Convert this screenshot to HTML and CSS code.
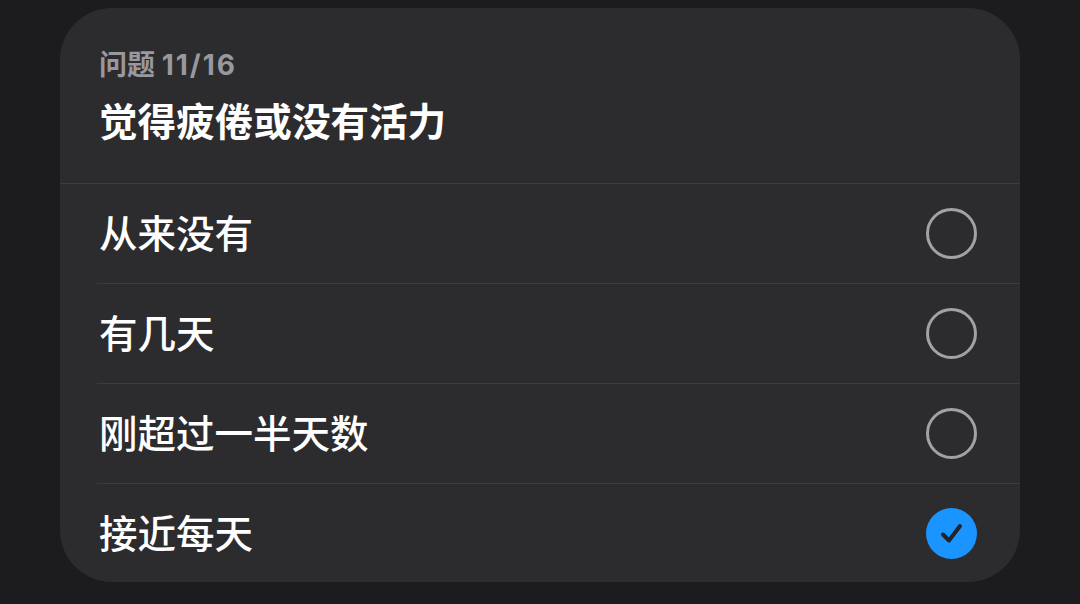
FILE: index.html
```html
<!DOCTYPE html>
<html lang="zh-CN">
<head>
<meta charset="utf-8">
<link rel="stylesheet" href="styles.css">
</head>
<body>
<div class="card">
  <div class="header">
    <div class="label">问题 <span class="num">11/16</span></div>
    <div class="title">觉得疲倦或没有活力</div>
  </div>
  <div class="options">
    <div class="row"><span class="text">从来没有</span><span class="radio"></span></div>
    <div class="row"><span class="text">有几天</span><span class="radio"></span></div>
    <div class="row"><span class="text">刚超过一半天数</span><span class="radio"></span></div>
    <div class="row"><span class="text">接近每天</span><span class="radio checked"><svg viewBox="0 0 51 51" width="51" height="51"><path d="M17 26.5 L23 32.5 L34 18" fill="none" stroke="#232326" stroke-width="4" stroke-linecap="round" stroke-linejoin="round"/></svg></span></div>
  </div>
</div>
</body>
</html>
```
FILE: styles.css
```css
html, body {
  margin: 0;
  padding: 0;
}
body {
  background: #1c1c1e;
  width: 1080px;
  height: 604px;
  overflow: hidden;
  font-family: "Inter", "Noto Sans CJK SC", sans-serif;
  color: #ffffff;
}
.card {
  margin: 8px 60px 0 60px;
  width: 960px;
  height: 574px;
  background: #2c2c2e;
  border-radius: 52px;
  overflow: hidden;
  display: flex;
  flex-direction: column;
}
.header {
  padding: 40px 40px 39px 39px;
  border-bottom: 1px solid #3d3d40;
}
.label {
  font-size: 28px;
  line-height: 34px;
  font-weight: 700;
  color: #98989e;
}
.num {
  letter-spacing: 2px;
}
.title {
  margin-top: 18px;
  font-size: 38.6px;
  line-height: 44px;
  font-weight: 700;
  color: #ffffff;
}
.options {
  padding-left: 37px;
}
.row {
  height: 99px;
  display: flex;
  align-items: center;
  justify-content: space-between;
  padding-left: 2px;
  padding-right: 43px;
  border-bottom: 1px solid #3d3d40;
}
.row:last-child {
  border-bottom: none;
}
.text {
  font-size: 38.5px;
  font-weight: 500;
  color: #ffffff;
  line-height: 44px;
}
.radio {
  width: 45px;
  height: 45px;
  border: 3px solid #a1a1a6;
  border-radius: 50%;
  display: flex;
  align-items: center;
  justify-content: center;
}
.radio.checked {
  width: 51px;
  height: 51px;
  border: none;
  background: #1a94ff;
}
.radio svg {
  display: block;
}
```
